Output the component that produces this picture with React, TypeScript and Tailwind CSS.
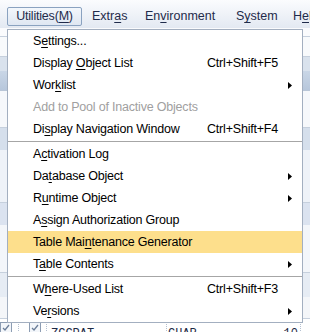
import React from "react";

type Item =
  | { sep: true }
  | {
      sep?: false;
      label: string;
      key?: number;
      shortcut?: string;
      sub?: boolean;
      disabled?: boolean;
      active?: boolean;
    };

const items: Item[] = [
  { label: "Settings...", key: 1 },
  { label: "Display Object List", key: 8, shortcut: "Ctrl+Shift+F5" },
  { label: "Worklist", key: 3, sub: true },
  { label: "Add to Pool of Inactive Objects", disabled: true },
  { label: "Display Navigation Window", key: 2, shortcut: "Ctrl+Shift+F4" },
  { sep: true },
  { label: "Activation Log", key: 1 },
  { label: "Database Object", key: 2, sub: true },
  { label: "Runtime Object", key: 1, sub: true },
  { label: "Assign Authorization Group", key: 1 },
  { label: "Table Maintenance Generator", key: 9, active: true },
  { label: "Table Contents", key: 1, sub: true },
  { sep: true },
  { label: "Where-Used List", key: 1, shortcut: "Ctrl+Shift+F3" },
  { label: "Versions", key: 2, sub: true },
];

const Mnemonic = ({ text, at }: { text: string; at?: number }) => {
  if (at === undefined) return <>{text}</>;
  return (
    <>
      {text.slice(0, at)}
      <span className="underline underline-offset-[2px]">{text[at]}</span>
      {text.slice(at + 1)}
    </>
  );
};

const Arrow = () => (
  <svg width="4" height="7" viewBox="0 0 4 7" className="ml-auto mr-[10px] shrink-0">
    <path d="M0 0L4 3.5L0 7Z" fill="#000" />
  </svg>
);

const Checkbox = ({ className }: { className: string }) => (
  <div
    className={`h-[12px] w-[12px] shrink-0 border border-[#8d9db3] bg-[#f3f6fa] ${className}`}
  >
    <svg width="10" height="10" viewBox="0 0 10 10">
      <path d="M2 5L4 7L8 2" stroke="#6b7e99" strokeWidth="1.3" fill="none" />
    </svg>
  </div>
);

const MenuBarItem = ({ text, at, w }: { text: string; at: number; w: string }) => (
  <div className={`${w} flex h-[19px] shrink-0 items-center text-[12.5px] text-[#1f2b4b]`}>
    <Mnemonic text={text} at={at} />
  </div>
);

export default function App() {
  return (
    <div
      className="relative h-[332px] w-[310px] overflow-hidden bg-[#f2f5f9]"
      style={{ fontFamily: '"Liberation Sans", Arial, sans-serif' }}
    >
      {/* menu bar */}
      <div className="flex h-[28px] items-end bg-gradient-to-b from-[#fbfcfe] to-[#e3e9f2] pb-[2px]">
        <div className="ml-[7px] mr-[10px] flex h-[19px] w-[75px] shrink-0 items-center justify-center rounded-[2px] border border-[#8aa2c0] bg-gradient-to-b from-[#f3f7fc] to-[#dfe7f2] text-[12.5px] tracking-[-0.2px] text-[#1f2b4b]">
          <Mnemonic text="Utilities(M)" at={10} />
        </div>
        <MenuBarItem text="Extras" at={4} w="w-[53px]" />
        <MenuBarItem text="Environment" at={2} w="w-[91px]" />
        <MenuBarItem text="System" at={1} w="w-[57px]" />
        <MenuBarItem text="Help" at={1} w="w-[40px]" />
      </div>

      {/* screen behind the menu */}
      <div className="h-[9px] border-b border-[#c6d0dd] bg-[#fafbfd]" />
      <div className="h-[20px] border-b border-[#c6d0dd] bg-[#f8fafc]" />
      <div className="h-[14px] bg-[#d9e2ed]" />
      <div className="h-[20px] border-b border-[#b9c6d7] bg-gradient-to-b from-[#c9d6e6] to-[#b7c7dc]" />
      <div className="h-[37px] border-b border-[#c6d0dd] bg-[#f6f8fb]" />
      <div className="h-[22px] bg-[#d5dfec]" />
      <div className="h-[53px] border-b border-[#c6d0dd] bg-[#eef2f8]" />
      <div className="h-[22px] bg-[#dbe3f0]" />
      <div className="h-[48px] border-b border-[#c6d0dd] bg-[#f3f6fa]" />
      <div className="h-[24px] bg-[#e6ecf4]" />
      <div className="h-[22px] border-b border-[#c6d0dd] bg-[#f4f6f9]" />
      <div
        className="flex h-[20px] items-start bg-white pt-[3px] text-[12px] text-[#1d2a44]"
        style={{ fontFamily: '"Liberation Mono", monospace' }}
      >
        <Checkbox className="ml-[0px]" />
        <div className="ml-[6px] h-full w-[12px] border-l border-dotted border-[#b4c0d0]" />
        <Checkbox className="ml-[-1px]" />
        <div className="ml-[5px] h-full border-l border-dotted border-[#b4c0d0]" />
        <span className="ml-[4px] mt-[2px] w-[115px] leading-[20px]">ZCCPAT</span>
        <div className="h-full border-l border-dotted border-[#b4c0d0]" />
        <span className="ml-[1px] mt-[2px] w-[110px] leading-[20px]">CHAR</span>
        <span className="mt-[2px] w-[20px] text-right leading-[20px]">10</span>
        <div className="ml-[2px] h-full border-l border-dotted border-[#b4c0d0]" />
      </div>

      {/* dropdown */}
      <div className="absolute left-[7px] top-[29px] w-[296px] border border-[#a3afc0] bg-white text-[12.5px] tracking-[-0.2px] text-black">
        {items.map((it, i) =>
          it.sep ? (
            <div key={i} className="flex h-[3px] items-center">
              <div className="h-px w-full bg-[#a6a6a6]" />
            </div>
          ) : (
            <div
              key={i}
              className={`flex h-[22px] items-center pl-[25px] ${
                it.active ? "bg-[#fddf8c]" : ""
              } ${it.disabled ? "text-[#a0a0a0]" : ""}`}
            >
              <span className="w-[174px] shrink-0 whitespace-nowrap">
                <Mnemonic text={it.label} at={it.key} />
              </span>
              {it.shortcut && <span className="whitespace-nowrap">{it.shortcut}</span>}
              {it.sub && <Arrow />}
            </div>
          )
        )}
      </div>
    </div>
  );
}
